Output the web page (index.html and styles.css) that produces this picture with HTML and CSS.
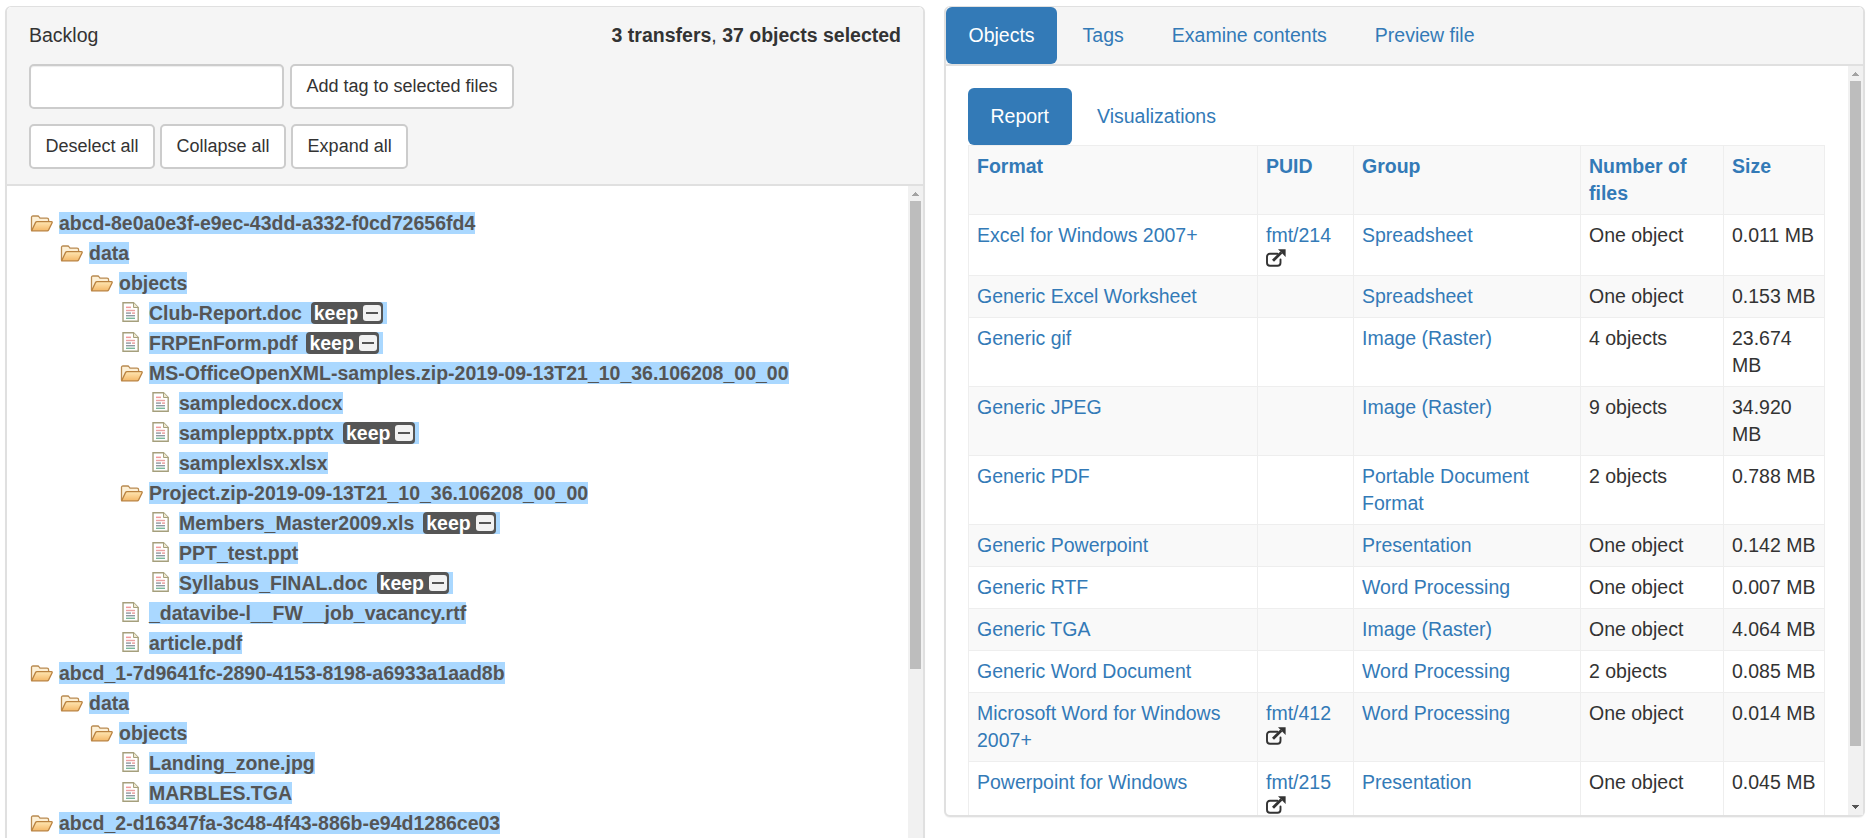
FILE: index.html
```html
<!DOCTYPE html>
<html lang="en">
<head>
<meta charset="utf-8">
<title>Backlog</title>
<link rel="stylesheet" href="styles.css">
</head>
<body>
<svg class="defs" width="0" height="0" aria-hidden="true">
  <defs>
    <linearGradient id="flap" x1="0" y1="0" x2="0" y2="1">
      <stop offset="0" stop-color="#ffe7b4"/>
      <stop offset="1" stop-color="#f4b868"/>
    </linearGradient>
    <symbol id="folder" viewBox="0 0 23 17">
      <path d="M1.5 15.5V2.6Q1.5 1 3 1H7.5Q8.6 1 9.2 2L10 3.2H17Q18.6 3.2 18.6 4.8V7" fill="#fdf0d6" stroke="#b98a50" stroke-width="1.3"/>
      <path d="M1.6 15.8L5.6 7.4Q6 6.6 7 6.6H21.2Q22.6 6.6 22 7.9L18.6 15Q18.2 15.8 17.2 15.8Z" fill="url(#flap)" stroke="#b98240" stroke-width="1.3" stroke-linejoin="round"/>
    </symbol>
    <symbol id="doc" viewBox="0 0 17 20">
      <path d="M1 .8H11.5L16.2 5.5V19.2H1Z" fill="#fff" stroke="#a59f7c" stroke-width="1.4"/>
      <path d="M11.5 .8V5.5H16.2" fill="#efe9cf" stroke="#a59f7c" stroke-width="1"/>
      <rect x="4" y="4.6" width="5" height="1.5" fill="#f29a9a"/>
      <rect x="4" y="7.8" width="9" height="1.4" fill="#e8a0a0"/>
      <rect x="4" y="10.4" width="5" height="1.4" fill="#8f97a0"/>
      <rect x="10" y="10.4" width="3" height="1.4" fill="#e89a9a"/>
      <rect x="4" y="13" width="9" height="1.4" fill="#8f97a0"/>
      <rect x="4" y="15.6" width="9" height="1.4" fill="#79b79a"/>
    </symbol>
    <symbol id="ext" viewBox="0 0 20 18">
      <path d="M11.5 4.8H4Q1 4.8 1 7.8V13.8Q1 16.8 4 16.8H11.5Q14.5 16.8 14.5 13.8V10.5" fill="none" stroke="#333" stroke-width="1.9" stroke-linecap="round"/>
      <path d="M7 11.8L15.3 3.5" fill="none" stroke="#333" stroke-width="2.8"/>
      <path d="M12 .3H19.6V7.9Z" fill="#333"/>
    </symbol>
  </defs>
</svg>

<main class="layout">
  <section class="panel backlog">
    <header class="backlog-head">
      <div class="head-line">
        <span>Backlog</span>
        <span><b>3 transfers</b>, <b>37 objects selected</b></span>
      </div>
      <div class="controls">
        <input class="tag-input" type="text" aria-label="Tag">
        <button class="btn">Add tag to selected files</button>
      </div>
      <div class="controls controls-tight">
        <button class="btn">Deselect all</button>
        <button class="btn">Collapse all</button>
        <button class="btn">Expand all</button>
      </div>
    </header>
    <div class="scroll-area">
      <div class="scroller">
        <ul class="tree">
          <li>
            <div class="node"><svg class="ico-folder"><use href="#folder"/></svg><span class="title">abcd-8e0a0e3f-e9ec-43dd-a332-f0cd72656fd4</span></div>
            <ul>
              <li>
                <div class="node"><svg class="ico-folder"><use href="#folder"/></svg><span class="title">data</span></div>
                <ul>
                  <li>
                    <div class="node"><svg class="ico-folder"><use href="#folder"/></svg><span class="title">objects</span></div>
                    <ul>
                      <li><div class="node"><svg class="ico-doc"><use href="#doc"/></svg><span class="title">Club-Report.doc<span class="tag">keep<i class="tag-x"></i></span></span></div></li>
                      <li><div class="node"><svg class="ico-doc"><use href="#doc"/></svg><span class="title">FRPEnForm.pdf<span class="tag">keep<i class="tag-x"></i></span></span></div></li>
                      <li>
                        <div class="node"><svg class="ico-folder"><use href="#folder"/></svg><span class="title">MS-OfficeOpenXML-samples.zip-2019-09-13T21_10_36.106208_00_00</span></div>
                        <ul>
                          <li><div class="node"><svg class="ico-doc"><use href="#doc"/></svg><span class="title">sampledocx.docx</span></div></li>
                          <li><div class="node"><svg class="ico-doc"><use href="#doc"/></svg><span class="title">samplepptx.pptx<span class="tag">keep<i class="tag-x"></i></span></span></div></li>
                          <li><div class="node"><svg class="ico-doc"><use href="#doc"/></svg><span class="title">samplexlsx.xlsx</span></div></li>
                        </ul>
                      </li>
                      <li>
                        <div class="node"><svg class="ico-folder"><use href="#folder"/></svg><span class="title">Project.zip-2019-09-13T21_10_36.106208_00_00</span></div>
                        <ul>
                          <li><div class="node"><svg class="ico-doc"><use href="#doc"/></svg><span class="title">Members_Master2009.xls<span class="tag">keep<i class="tag-x"></i></span></span></div></li>
                          <li><div class="node"><svg class="ico-doc"><use href="#doc"/></svg><span class="title">PPT_test.ppt</span></div></li>
                          <li><div class="node"><svg class="ico-doc"><use href="#doc"/></svg><span class="title">Syllabus_FINAL.doc<span class="tag">keep<i class="tag-x"></i></span></span></div></li>
                        </ul>
                      </li>
                      <li><div class="node"><svg class="ico-doc"><use href="#doc"/></svg><span class="title">_datavibe-l__FW__job_vacancy.rtf</span></div></li>
                      <li><div class="node"><svg class="ico-doc"><use href="#doc"/></svg><span class="title">article.pdf</span></div></li>
                    </ul>
                  </li>
                </ul>
              </li>
            </ul>
          </li>
          <li>
            <div class="node"><svg class="ico-folder"><use href="#folder"/></svg><span class="title">abcd_1-7d9641fc-2890-4153-8198-a6933a1aad8b</span></div>
            <ul>
              <li>
                <div class="node"><svg class="ico-folder"><use href="#folder"/></svg><span class="title">data</span></div>
                <ul>
                  <li>
                    <div class="node"><svg class="ico-folder"><use href="#folder"/></svg><span class="title">objects</span></div>
                    <ul>
                      <li><div class="node"><svg class="ico-doc"><use href="#doc"/></svg><span class="title">Landing_zone.jpg</span></div></li>
                      <li><div class="node"><svg class="ico-doc"><use href="#doc"/></svg><span class="title">MARBLES.TGA</span></div></li>
                    </ul>
                  </li>
                </ul>
              </li>
            </ul>
          </li>
          <li>
            <div class="node"><svg class="ico-folder"><use href="#folder"/></svg><span class="title">abcd_2-d16347fa-3c48-4f43-886b-e94d1286ce03</span></div>
          </li>
        </ul>
      </div>
      <div class="vbar">
        <span class="vbar-up"></span>
        <span class="vbar-thumb thumb-tree"></span>
      </div>
    </div>
  </section>

  <section class="panel report">
    <nav class="tabs">
      <a class="tab active">Objects</a>
      <a class="tab">Tags</a>
      <a class="tab">Examine contents</a>
      <a class="tab">Preview file</a>
    </nav>
    <div class="scroll-area">
      <div class="scroller report-scroll">
        <nav class="subtabs">
          <a class="tab active">Report</a>
          <a class="tab">Visualizations</a>
        </nav>
        <table class="formats">
          <colgroup>
            <col class="c-format"><col class="c-puid"><col class="c-group"><col class="c-count"><col class="c-size">
          </colgroup>
          <thead>
            <tr><th><a>Format</a></th><th><a>PUID</a></th><th><a>Group</a></th><th><a>Number of files</a></th><th><a>Size</a></th></tr>
          </thead>
          <tbody>
            <tr><td><a>Excel for Windows 2007+</a></td><td><a>fmt/214</a><svg class="ico-ext"><use href="#ext"/></svg></td><td><a>Spreadsheet</a></td><td>One object</td><td>0.011 MB</td></tr>
            <tr><td><a>Generic Excel Worksheet</a></td><td></td><td><a>Spreadsheet</a></td><td>One object</td><td>0.153 MB</td></tr>
            <tr><td><a>Generic gif</a></td><td></td><td><a>Image (Raster)</a></td><td>4 objects</td><td>23.674 MB</td></tr>
            <tr><td><a>Generic JPEG</a></td><td></td><td><a>Image (Raster)</a></td><td>9 objects</td><td>34.920 MB</td></tr>
            <tr><td><a>Generic PDF</a></td><td></td><td><a>Portable Document Format</a></td><td>2 objects</td><td>0.788 MB</td></tr>
            <tr><td><a>Generic Powerpoint</a></td><td></td><td><a>Presentation</a></td><td>One object</td><td>0.142 MB</td></tr>
            <tr><td><a>Generic RTF</a></td><td></td><td><a>Word Processing</a></td><td>One object</td><td>0.007 MB</td></tr>
            <tr><td><a>Generic TGA</a></td><td></td><td><a>Image (Raster)</a></td><td>One object</td><td>4.064 MB</td></tr>
            <tr><td><a>Generic Word Document</a></td><td></td><td><a>Word Processing</a></td><td>2 objects</td><td>0.085 MB</td></tr>
            <tr><td><a>Microsoft Word for Windows 2007+</a></td><td><a>fmt/412</a><svg class="ico-ext"><use href="#ext"/></svg></td><td><a>Word Processing</a></td><td>One object</td><td>0.014 MB</td></tr>
            <tr><td><a>Powerpoint for Windows</a></td><td><a>fmt/215</a><svg class="ico-ext"><use href="#ext"/></svg></td><td><a>Presentation</a></td><td>One object</td><td>0.045 MB</td></tr>
          </tbody>
        </table>
      </div>
      <div class="vbar">
        <span class="vbar-up"></span>
        <span class="vbar-thumb thumb-report"></span>
        <span class="vbar-down"></span>
      </div>
    </div>
  </section>
</main>
</body>
</html>
```
FILE: styles.css
```css
* { box-sizing: border-box; }

html, body {
  height: 100%;
  margin: 0;
  overflow: hidden;
  background: #fff;
}

body {
  font-family: "Liberation Sans", Arial, sans-serif;
  font-size: 19.5px;
  line-height: 27px;
  color: #333;
}

.defs { display: block; height: 0; }

.layout {
  display: flex;
  align-items: flex-start;
  gap: 19px;
  padding: 6px 0 0 5px;
}

.panel {
  display: flex;
  flex-direction: column;
  flex: none;
  background: #fff;
  border: 2px solid #e0e0e0;
  border-top-width: 1px;
  border-radius: 6px;
  box-shadow: 0 1px 1px rgba(0, 0, 0, .05);
}

.backlog { width: 920px; height: 848px; }
.report { width: 921px; height: 811px; }

.backlog-head {
  flex: none;
  padding: 15px 22px 15px 22px;
  background: #f5f5f5;
  border-bottom: 2px solid #e0e0e0;
  border-radius: 5px 5px 0 0;
}

.head-line {
  display: flex;
  justify-content: space-between;
  margin-bottom: 15px;
}

.controls {
  display: flex;
  gap: 6px;
  margin-bottom: 15px;
}

.controls-tight { gap: 5px; margin-bottom: 0; }

.tag-input {
  width: 255px;
  height: 45px;
  padding: 7px 14px;
  font-family: inherit;
  font-size: 18px;
  background: #fff;
  border: 2px solid #ccc;
  border-radius: 5px;
  box-shadow: inset 0 1px 1px rgba(0, 0, 0, .075);
}

.btn {
  height: 45px;
  padding: 7px 14.5px;
  font-family: inherit;
  font-size: 18px;
  line-height: 27px;
  color: #333;
  background: #fff;
  border: 2px solid #ccc;
  border-radius: 5px;
}

.scroll-area {
  position: relative;
  flex: 1;
  min-height: 0;
}

.scroller {
  height: 100%;
  overflow: hidden;
}

.vbar {
  position: absolute;
  top: 0;
  right: 0;
  bottom: 0;
  display: flex;
  flex-direction: column;
  width: 15px;
  background: #f1f1f1;
}

.vbar-up, .vbar-down {
  display: block;
  flex: none;
  height: 15px;
}

.vbar-up {
  background: conic-gradient(from 135deg at 50% 6px, #a3a3a3 90deg, transparent 0) no-repeat top / 100% 10px;
}

.vbar-down {
  margin-top: auto;
  background: conic-gradient(from -45deg at 50% 4px, #555 90deg, transparent 0) no-repeat bottom / 100% 10px;
}

.vbar-thumb {
  display: block;
  flex: none;
  margin: 0 2px;
  background: #bdbdbd;
}

.thumb-tree { height: 468px; }
.thumb-report { height: 665px; }

.tree, .tree ul {
  margin: 0;
  padding: 0;
  list-style: none;
}

.tree { padding: 22px 0 0 23px; }
.tree ul { padding-left: 30px; }

.node {
  display: flex;
  align-items: center;
  height: 30px;
}

.ico-folder {
  flex: none;
  width: 23px;
  height: 17px;
  margin-right: 6px;
}

.ico-doc {
  flex: none;
  width: 17px;
  height: 20px;
  margin: 0 10px 0 2px;
  position: relative;
  top: -1px;
}

.title {
  display: inline-flex;
  align-items: center;
  height: 22px;
  line-height: 22px;
  font-weight: bold;
  white-space: nowrap;
  color: #555;
  background: #aad8ff;
}

.tag {
  display: inline-flex;
  align-items: center;
  height: 22px;
  margin: 0 4px 0 9px;
  padding: 0 2px 0 3px;
  color: #fff;
  background: #555;
  border-radius: 4px;
}

.tag-x {
  position: relative;
  width: 18px;
  height: 16px;
  margin-left: 5px;
  background: #f2f2f2;
  border-radius: 3px;
}

.tag-x::after {
  content: "";
  position: absolute;
  left: 3px;
  right: 3px;
  top: 7px;
  height: 2px;
  background: #555;
}

.tabs, .subtabs {
  display: flex;
  flex: none;
  gap: 3px;
}

.tabs {
  background: #f5f5f5;
  border-bottom: 2px solid #e0e0e0;
  border-radius: 5px 5px 0 0;
}

.tab {
  padding: 15px 22.5px;
  color: #337ab7;
  border-radius: 6px;
}

.tab.active { color: #fff; background: #337ab7; }

.report-scroll { padding: 22px 23px 0 22px; }

.formats {
  width: 856px;
  table-layout: fixed;
  border-collapse: collapse;
}

.c-format { width: 289px; }
.c-puid { width: 96px; }
.c-group { width: 227px; }
.c-count { width: 143px; }
.c-size { width: 101px; }

.formats th, .formats td {
  padding: 7px 8px;
  text-align: left;
  vertical-align: top;
  border: 1px solid #eee;
}

.formats th { background: #f9f9f9; font-weight: bold; }
.formats a { color: #337ab7; }
.formats tbody tr:nth-child(even) { background: #f9f9f9; }

.ico-ext {
  display: block;
  width: 20px;
  height: 18px;
  margin-bottom: 1px;
}
```
